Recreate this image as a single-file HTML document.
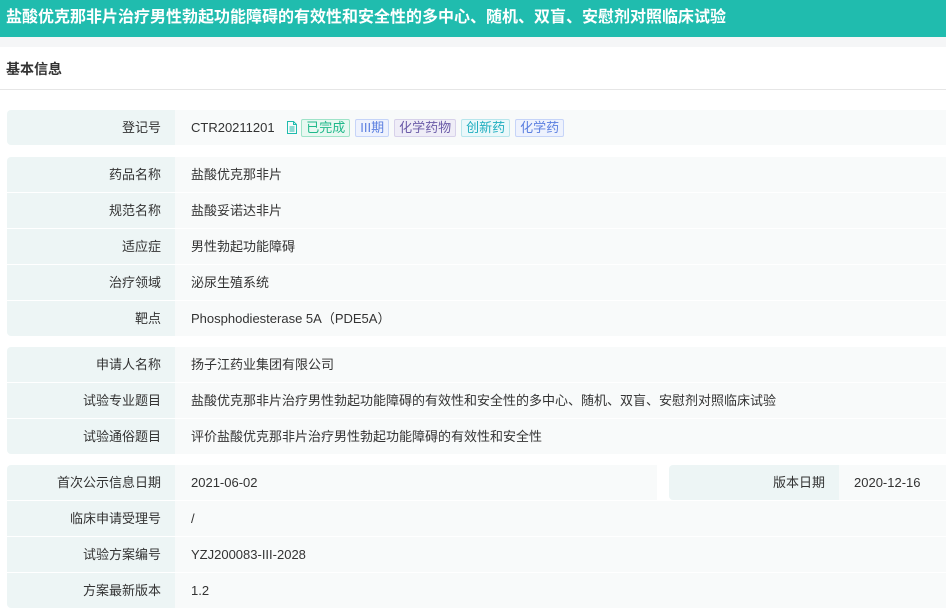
<!DOCTYPE html><html><head><meta charset="utf-8"><style>
*{margin:0;padding:0;box-sizing:border-box}
body{width:946px;height:614px;overflow:hidden;background:#fff;font-family:"Liberation Sans","Noto Sans CJK SC",sans-serif;font-size:13px;color:#333}
.hd{height:37px;background:#20bcae;color:#fff;font-weight:bold;font-size:16px;line-height:35px;padding-left:6px;white-space:nowrap}
.gap{height:10px;background:#f5f6f7}
.sec{height:43px;border-bottom:1px solid #e6e6e6;font-weight:bold;font-size:14px;line-height:44px;padding-left:6px}
.r{position:absolute;left:7px;right:0;height:35px;display:flex;line-height:35px}
.l{width:168px;background:#edf5f5;text-align:right;padding-right:14px}
.v{flex:1;background:#f8fafa;padding-left:16px;white-space:nowrap}
.first .l{border-top-left-radius:4px}.last .l{border-bottom-left-radius:4px}
.t{display:inline-block;height:18px;line-height:16px;padding:0 4px;border:1px solid;border-radius:2px;margin-left:5px;font-size:13px;vertical-align:middle;position:relative;top:-1px}
</style></head><body>
<div class="hd">盐酸优克那非片治疗男性勃起功能障碍的有效性和安全性的多中心、随机、双盲、安慰剂对照临床试验</div>
<div class="gap"></div>
<div class="sec">基本信息</div>
<div class="r first last" style="top:110px"><div class="l">登记号</div><div class="v">CTR20211201 <svg width="12" height="13" viewBox="0 0 12 13" style="vertical-align:middle;margin-left:8px;position:relative;top:-1px"><path d="M1.5 .5h6l3 3v9h-9z M7.5 .5v3h3 M3.5 6h5M3.5 8h5M3.5 10h5" fill="none" stroke="#20bcae"/></svg><span class="t" style="color:#1fb88a;border-color:#9fe3c8;background:#e8f8f1;margin-left:3px">已完成</span><span class="t" style="color:#5b7fe0;border-color:#c6d4f8;background:#eef2fd">III期</span><span class="t" style="color:#6b5ca8;border-color:#d7d1ea;background:#efedf7">化学药物</span><span class="t" style="color:#20aebf;border-color:#b8e6ec;background:#eaf8fa">创新药</span><span class="t" style="color:#5b7fe0;border-color:#c6d4f8;background:#eef2fd">化学药</span></div></div>
<div class="r first" style="top:157px"><div class="l">药品名称</div><div class="v">盐酸优克那非片</div></div>
<div class="r" style="top:193px"><div class="l">规范名称</div><div class="v">盐酸妥诺达非片</div></div>
<div class="r" style="top:229px"><div class="l">适应症</div><div class="v">男性勃起功能障碍</div></div>
<div class="r" style="top:265px"><div class="l">治疗领域</div><div class="v">泌尿生殖系统</div></div>
<div class="r last" style="top:301px"><div class="l">靶点</div><div class="v">Phosphodiesterase 5A（PDE5A）</div></div>
<div class="r first" style="top:347px"><div class="l">申请人名称</div><div class="v">扬子江药业集团有限公司</div></div>
<div class="r" style="top:383px"><div class="l">试验专业题目</div><div class="v">盐酸优克那非片治疗男性勃起功能障碍的有效性和安全性的多中心、随机、双盲、安慰剂对照临床试验</div></div>
<div class="r last" style="top:419px"><div class="l">试验通俗题目</div><div class="v">评价盐酸优克那非片治疗男性勃起功能障碍的有效性和安全性</div></div>
<div class="r first" style="top:465px"><div class="l">首次公示信息日期</div><div class="v" style="flex:none;width:482px">2021-06-02</div><div style="width:12px;background:#fff"></div><div class="l" style="width:170px;border-top-left-radius:4px;border-bottom-left-radius:4px">版本日期</div><div class="v" style="padding-left:15px">2020-12-16</div></div>
<div class="r" style="top:501px"><div class="l">临床申请受理号</div><div class="v">/</div></div>
<div class="r" style="top:537px"><div class="l">试验方案编号</div><div class="v">YZJ200083-III-2028</div></div>
<div class="r last" style="top:573px"><div class="l">方案最新版本</div><div class="v">1.2</div></div>
</body></html>
